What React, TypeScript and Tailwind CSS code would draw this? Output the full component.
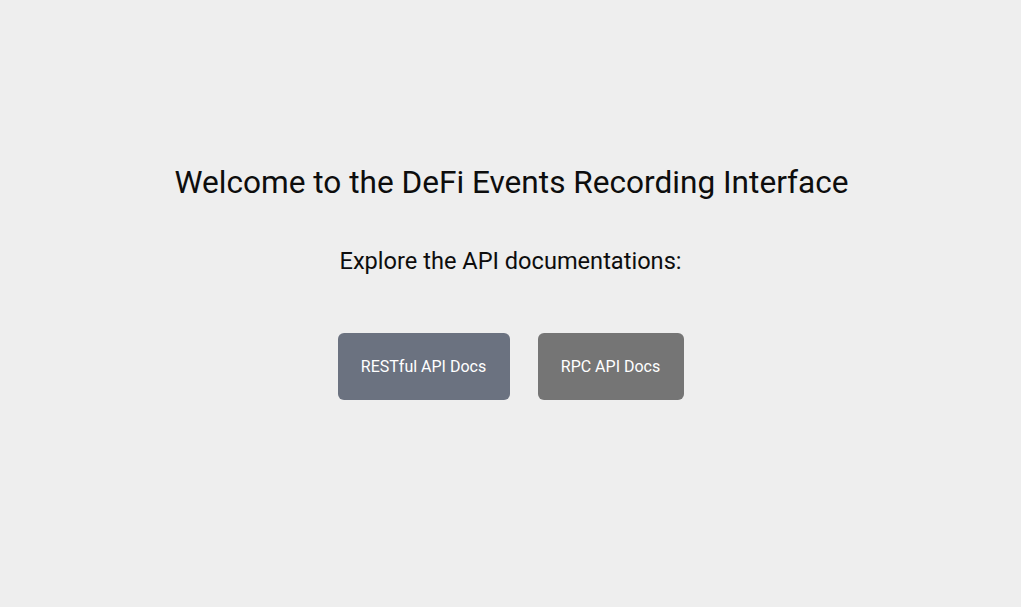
export default function App() {
  return (
    <div className="min-h-[607px] w-full bg-[#eeeeee] font-['Roboto',sans-serif]">
      <div className="flex flex-col items-center pt-[159px]">
        {/* heading */}
        <h1 className="pl-[2px] text-[31.6px] leading-[48px] text-[#0d0d0d]">
          Welcome to the DeFi Events Recording Interface
        </h1>
        <p className="mt-[36px] text-[23.6px] leading-[36px] text-[#0d0d0d]">
          Explore the API documentations:
        </p>

        {/* doc links */}
        <div className="mt-[54px] flex gap-[28px]">
          <button className="h-[67px] w-[172px] rounded-md bg-[#6b7280] text-[16px] text-white">
            RESTful API Docs
          </button>
          <button className="h-[67px] w-[146px] rounded-md bg-[#757575] text-[16px] text-white">
            RPC API Docs
          </button>
        </div>
      </div>
    </div>
  );
}
